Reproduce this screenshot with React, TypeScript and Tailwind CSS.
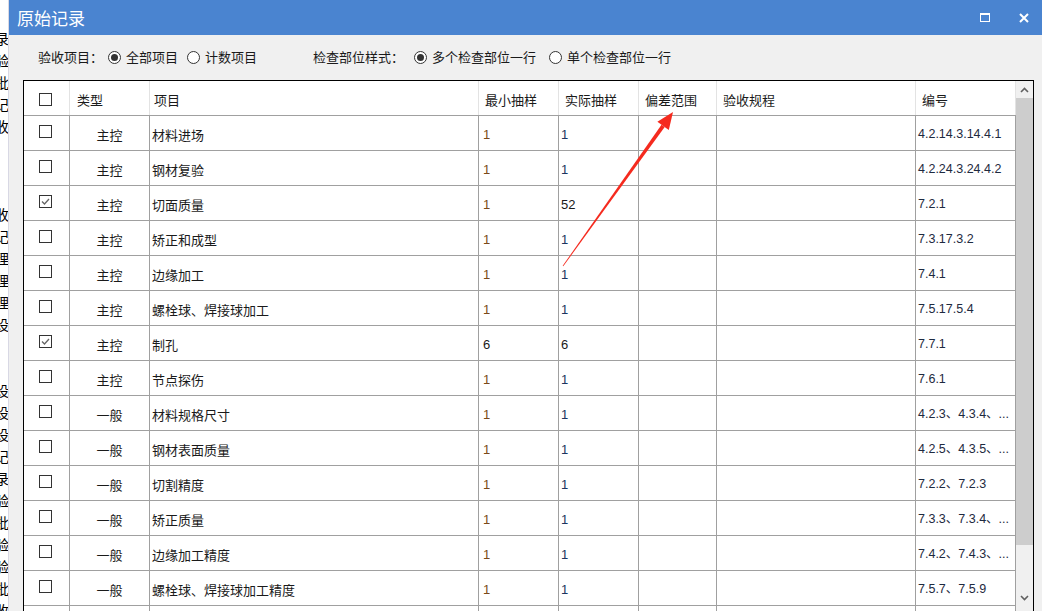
import React from "react";

const sideChars = ["录", "验", "批", "记", "收", "", "", "", "收", "记", "理", "理", "理", "设", "", "", "设", "设", "设", "记", "录", "验", "批", "验", "验", "批", "收"];

type Row = { checked?: boolean; type: string; name: string; min: string; actual: string; code: string };

const rows: Row[] = [
    { type: "主控", name: "材料进场", min: "1", actual: "1", code: "4.2.14.3.14.4.1" },
    { type: "主控", name: "钢材复验", min: "1", actual: "1", code: "4.2.24.3.24.4.2" },
    { checked: true, type: "主控", name: "切面质量", min: "1", actual: "52", code: "7.2.1" },
    { type: "主控", name: "矫正和成型", min: "1", actual: "1", code: "7.3.17.3.2" },
    { type: "主控", name: "边缘加工", min: "1", actual: "1", code: "7.4.1" },
    { type: "主控", name: "螺栓球、焊接球加工", min: "1", actual: "1", code: "7.5.17.5.4" },
    { checked: true, type: "主控", name: "制孔", min: "6", actual: "6", code: "7.7.1" },
    { type: "主控", name: "节点探伤", min: "1", actual: "1", code: "7.6.1" },
    { type: "一般", name: "材料规格尺寸", min: "1", actual: "1", code: "4.2.3、4.3.4、..." },
    { type: "一般", name: "钢材表面质量", min: "1", actual: "1", code: "4.2.5、4.3.5、..." },
    { type: "一般", name: "切割精度", min: "1", actual: "1", code: "7.2.2、7.2.3" },
    { type: "一般", name: "矫正质量", min: "1", actual: "1", code: "7.3.3、7.3.4、..." },
    { type: "一般", name: "边缘加工精度", min: "1", actual: "1", code: "7.4.2、7.4.3、..." },
    { type: "一般", name: "螺栓球、焊接球加工精度", min: "1", actual: "1", code: "7.5.7、7.5.9" },
    { type: "一般", name: "焊接球焊缝", min: "1", actual: "1", code: "7.5.8" },
];

const cjk = { fontFamily: '"Noto Sans CJK SC", "Liberation Sans", sans-serif' };
const num = { fontFamily: '"Liberation Sans", "Noto Sans CJK SC", sans-serif' };

function Checkbox({ checked }: { checked?: boolean }) {
    return (
        <div className="w-[13px] h-[13px] border border-[#333] bg-white flex items-center justify-center">
            {checked && (
                <svg width="11" height="11" viewBox="0 0 11 11">
                    <path d="M2 5.5 L4.5 8 L9 3" fill="none" stroke="#666" strokeWidth="1.3" />
                </svg>
            )}
        </div>
    );
}

function Radio({ on, label }: { on?: boolean; label: string }) {
    return (
        <div className="flex items-center gap-[5px]">
            <div className="w-[13px] h-[13px] rounded-full border border-[#333] bg-white flex items-center justify-center">
                {on && <div className="w-[7px] h-[7px] rounded-full bg-[#333]" />}
            </div>
            <span>{label}</span>
        </div>
    );
}

const cols = "grid grid-cols-[46px_80px_329px_80px_80px_78px_199px_100px]";

export default function App() {
    return (
        <div className="relative flex w-[1042px] h-[611px] overflow-hidden bg-white text-[13px] text-[#1a1a1a]" style={cjk}>
            {/* background window edge */}
            <div className="w-[9px] shrink-0 overflow-hidden pt-[27px] leading-[22px] text-[14px] text-black border-r border-[#d8d8e4]">
                {sideChars.map((c, i) => (
                    <div key={i} className="h-[22px] ml-[-5px] whitespace-nowrap">{c}</div>
                ))}
            </div>

            <div className="flex-1 flex flex-col min-w-0">
                {/* Title bar */}
                <div className="h-[35px] shrink-0 bg-[#4a84d0] flex items-center pl-[8px] pr-[13px]">
                    <span className="text-white text-[17px] leading-none">原始记录</span>
                    <div className="ml-auto flex items-center gap-[29px]">
                        <div className="w-[10px] h-[9px] border border-white border-t-2" />
                        <svg width="10" height="10" viewBox="0 0 10 10">
                            <path d="M1 1 L9 9 M9 1 L1 9" stroke="white" strokeWidth="2" />
                        </svg>
                    </div>
                </div>

                {/* Body */}
                <div className="flex-1 bg-[#f0f0f0] pl-[14px] pr-[8px] flex flex-col min-h-0">
                    <div className="h-[45px] shrink-0 flex items-center pl-[15px] pb-[1px]">
                        <span className="mr-[5px]">验收项目：</span>
                        <div className="flex items-center gap-[9px]">
                            <Radio on label="全部项目" />
                            <Radio label="计数项目" />
                        </div>
                        <span className="ml-[56px] mr-[10px]">检查部位样式：</span>
                        <div className="flex items-center gap-[13px]">
                            <Radio on label="多个检查部位一行" />
                            <Radio label="单个检查部位一行" />
                        </div>
                    </div>

                    {/* Table */}
                    <div className="flex-1 flex border-t border-l border-r border-black bg-white min-h-0 overflow-hidden">
                        <div className="w-[992px] shrink-0 flex flex-col">
                            <div className={`${cols} h-[35px] border-b border-[#a0a0a0] shrink-0`}>
                                <div className="border-r border-[#e3e3e3] flex items-center pl-[15px] pt-[2px]"><Checkbox /></div>
                                <div className="border-r border-[#e3e3e3] flex items-center pl-[7px] pt-[4px]">类型</div>
                                <div className="border-r border-[#e3e3e3] flex items-center pl-[4px] pt-[4px]">项目</div>
                                <div className="border-r border-[#e3e3e3] flex items-center pl-[6px] pt-[4px]">最小抽样</div>
                                <div className="border-r border-[#e3e3e3] flex items-center pl-[6px] pt-[4px]">实际抽样</div>
                                <div className="border-r border-[#e3e3e3] flex items-center pl-[6px] pt-[4px]">偏差范围</div>
                                <div className="border-r border-[#e3e3e3] flex items-center pl-[6px] pt-[4px]">验收规程</div>
                                <div className="border-r border-[#e3e3e3] flex items-center pl-[6px] pt-[4px]">编号</div>
                            </div>
                            {rows.map((r, i) => (
                                <div key={i} className={`${cols} h-[35px] border-b border-[#a0a0a0] shrink-0`}>
                                    <div className="border-r border-[#a0a0a0] flex items-center pl-[15px] pb-[3px]"><Checkbox checked={r.checked} /></div>
                                    <div className="border-r border-[#a0a0a0] flex items-center justify-center pt-[3px]">{r.type}</div>
                                    <div className="border-r border-[#a0a0a0] flex items-center pl-[2px] pt-[3px]">{r.name}</div>
                                    <div className={`border-r border-[#a0a0a0] flex items-center pl-[4px] pt-[3px] ${r.min === "1" ? "text-[#7a4a18]" : "text-[#1a1a1a]"}`} style={num}>{r.min}</div>
                                    <div className={`border-r border-[#a0a0a0] flex items-center pl-[2px] pt-[3px] ${r.actual === "1" ? "text-[#1c3560]" : "text-[#1a1a1a]"}`} style={num}>{r.actual}</div>
                                    <div className="border-r border-[#a0a0a0]" />
                                    <div className="border-r border-[#a0a0a0]" />
                                    <div className="border-r border-[#a0a0a0] flex items-center pl-[2px] pt-[3px] text-[12.5px] text-[#1e2a40] whitespace-nowrap" style={num}>{r.code}</div>
                                </div>
                            ))}
                        </div>

                        {/* Scrollbar */}
                        <div className="flex-1 bg-[#f0f0f0] flex flex-col items-center">
                            <div className="h-[17px] w-full flex items-center justify-center">
                                <svg width="9" height="6" viewBox="0 0 9 6">
                                    <path d="M1 5 L4.5 1.5 L8 5" fill="none" stroke="#606060" strokeWidth="1.6" />
                                </svg>
                            </div>
                            <div className="w-full h-[447px] bg-[#cdcdcd]" />
                            <div className="flex-1" />
                            <div className="h-[17px] w-full flex items-start justify-center pt-[1px]">
                                <svg width="9" height="6" viewBox="0 0 9 6">
                                    <path d="M1 1 L4.5 4.5 L8 1" fill="none" stroke="#606060" strokeWidth="1.6" />
                                </svg>
                            </div>
                        </div>
                    </div>
                </div>
            </div>

            {/* annotation arrow */}
            <svg className="absolute inset-0 pointer-events-none" width="1042" height="611" viewBox="0 0 1042 611">
                <polygon points="563.3,266.2 562.7,265.8 661.5,124.7 664.7,127.1" fill="#f52a1e" />
                <polygon points="673,112 668.8,130 657.4,121.8" fill="#f52a1e" />
            </svg>
        </div>
    );
}
